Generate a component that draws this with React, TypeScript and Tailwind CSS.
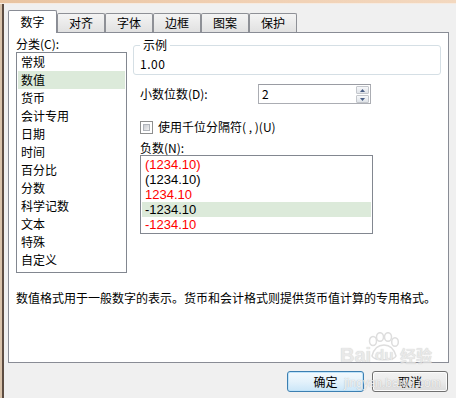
import React from "react";

const categories = ["常规", "数值", "货币", "会计专用", "日期", "时间", "百分比", "分数", "科学记数", "文本", "特殊", "自定义"];
const negs: { t: string; red: boolean }[] = [
  { t: "(1234.10)", red: true },
  { t: "(1234.10)", red: false },
  { t: "1234.10", red: true },
  { t: "-1234.10", red: false },
  { t: "-1234.10", red: true },
];
const tabs = ["对齐", "字体", "边框", "图案", "保护"];

function SpinArrows() {
  return (
    <div className="flex flex-col w-[13px] h-[18px] my-[0px] mr-[1px] gap-[1px] pt-[1px]">
      <div className="flex-1 flex items-center justify-center border border-[#c4c7cc] rounded-[1px] bg-gradient-to-b from-[#f7f8fa] to-[#dfe3e8]">
        <svg width="5" height="3" viewBox="0 0 5 3"><path d="M0 3 L2.5 0 L5 3 Z" fill="#4a5f86" /></svg>
      </div>
      <div className="flex-1 flex items-center justify-center border border-[#c4c7cc] rounded-[1px] bg-gradient-to-b from-[#f7f8fa] to-[#dfe3e8]">
        <svg width="5" height="3" viewBox="0 0 5 3"><path d="M0 0 L2.5 3 L5 0 Z" fill="#4a5f86" /></svg>
      </div>
    </div>
  );
}

export default function App() {
  return (
    <div className="relative w-[456px] h-[398px] overflow-hidden bg-[#f0f0f0] font-['Noto_Sans_CJK_SC',sans-serif] text-[12px] text-black flex flex-col">
      <div className="h-[3px] bg-gradient-to-r from-[#e8c3a0] via-[#f0cfb2] to-[#f3d8bf]" />
      <div className="h-[1px] bg-[#f6ebe1]" />
      <div className="flex flex-1">
        <div className="w-[2px] bg-[#d9c3ab]" />
        <div className="w-[2px] bg-[#5d4d42]" />
        <div className="flex-1 flex flex-col pl-[4px] pr-[7px] pt-[6px]">
          {/* tabs */}
          <div className="flex items-end h-[22px] relative z-10">
            <div className="w-[49px] h-[23px] -mb-[1px] border border-b-0 border-[#898c95] bg-white rounded-t-[2px] flex items-center justify-center leading-[16px] pb-[1px]">
              数字
            </div>
            {tabs.map((t) => (
              <div
                key={t}
                className="w-[48px] h-[19px] border border-b-0 border-[#8e9096] rounded-t-[2px] bg-gradient-to-b from-[#f4f4f4] to-[#e1e1e1] flex items-center justify-center leading-[16px]"
              >
                {t}
              </div>
            ))}
          </div>
          {/* panel */}
          <div className="w-[441px] h-[331px] border border-[#898c95] bg-white flex flex-col">
            <div className="flex">
              {/* left column */}
              <div className="ml-[7px] w-[111px] flex flex-col">
                <div className="mt-[3px] leading-[16px]">分类(C):</div>
                <div className="h-[221px] border border-[#828790] bg-white flex flex-col">
                  {categories.map((c) => (
                    <div
                      key={c}
                      className={
                        c === "数值"
                          ? "h-[18px] leading-[18px] mx-[1px] pl-[3px] bg-[#dceada]"
                          : "h-[18px] leading-[18px] mx-[1px] pl-[3px]"
                      }
                    >
                      {c}
                    </div>
                  ))}
                </div>
              </div>
              {/* right column */}
              <div className="ml-[6px] w-[308px] flex flex-col">
                <fieldset className="mt-[4px] border border-[#d5dfe5] rounded-[3px] px-[6px] pt-[3px] pb-[2px]">
                  <legend className="px-[3px] leading-[16px]">示例</legend>
                  <div className="leading-[16px] tracking-[0.5px]">1.00</div>
                </fieldset>
                <div className="mt-[9px] flex items-center h-[20px] pl-[7px]">
                  <div className="w-[118px] leading-[16px]">小数位数(D):</div>
                  <div className="w-[113px] h-[20px] border border-[#abadb3] border-t-[#9a9ca3] bg-white flex items-center justify-between">
                    <span className="pl-[3px] leading-[16px]">2</span>
                    <SpinArrows />
                  </div>
                </div>
                <div className="mt-[15px] flex items-center h-[16px] pl-[7px]">
                  <div className="w-[13px] h-[13px] border border-[#8e8f8f] bg-white p-[2px]">
                    <div className="w-full h-full border border-[#b0b4ba] bg-gradient-to-br from-[#c9ccd2] to-[#f2f2f2]" />
                  </div>
                  <span className="ml-[5px] leading-[16px]">使用千位分隔符( , )(U)</span>
                </div>
                <div className="mt-[6px] pl-[7px] leading-[14px]">负数(N):</div>
                <div className="ml-[7px] w-[233px] h-[79px] border border-[#828790] bg-white pt-[1px] flex flex-col font-['Liberation_Sans',sans-serif] text-[13px]">
                  {negs.map((n, i) => (
                    <div
                      key={i}
                      className={
                        (i === 3 ? "bg-[#dceada] " : "") +
                        (n.red ? "text-[#ff0000] " : "text-black ") +
                        "h-[15px] leading-[15px] mx-[1px] pl-[3px]"
                      }
                    >
                      {n.t}
                    </div>
                  ))}
                </div>
              </div>
            </div>
            <div className="mt-[17px] ml-[7px] leading-[16px]">
              数值格式用于一般数字的表示。货币和会计格式则提供货币值计算的专用格式。
            </div>
          </div>
          {/* buttons */}
          <div className="mt-[8px] flex justify-end gap-[8px] mr-[1px]">
            <div className="w-[77px] h-[21px] rounded-[3px] border border-[#3c7fb1] bg-gradient-to-b from-[#f3f9fd] via-[#e4f2fb] to-[#cbe6f8] shadow-[inset_0_0_0_1px_#bfe3fa] flex items-center justify-center leading-[16px]">
              确定
            </div>
            <div className="w-[76px] h-[21px] rounded-[3px] border border-[#707070] bg-gradient-to-b from-[#f2f2f2] via-[#ebebeb] to-[#dcdcdc] shadow-[inset_0_0_0_1px_#fcfcfc] flex items-center justify-center leading-[16px]">
              取消
            </div>
          </div>
        </div>
      </div>

      {/* Baidu watermark overlay */}
      <div className="absolute left-[338px] top-[332px] w-[100px] h-[60px] pointer-events-none select-none opacity-80">
        <svg className="absolute left-[26px] top-[0px]" width="36" height="30" viewBox="0 0 36 30">
          <g fill="none" stroke="#d6d6d6" strokeWidth="1.5">
            <ellipse cx="9" cy="9" rx="3.5" ry="4.5" />
            <ellipse cx="16" cy="5" rx="3.5" ry="4.3" />
            <ellipse cx="24" cy="5" rx="3.5" ry="4.3" />
            <ellipse cx="31" cy="10" rx="3.3" ry="4.3" />
            <path d="M8 24 C10 16, 14 13, 20 13 C26 13, 30 17, 32 24 C30 29, 10 29, 8 24 Z" />
          </g>
        </svg>
        <div className="absolute left-[2px] top-[12px] font-['Liberation_Sans',sans-serif] font-bold text-[20px] leading-[22px] text-[#e4e4e4] [text-shadow:0_0_1px_#b8b8b8]">
          Bai
        </div>
        <div className="absolute left-[37px] top-[14px] font-['Liberation_Sans',sans-serif] font-bold text-[15px] leading-[18px] text-[#e4e4e4] [text-shadow:0_0_1px_#b8b8b8]">
          du
        </div>
        <div className="absolute left-[62px] top-[13px] font-bold text-[16px] leading-[20px] text-[#e4e4e4] [text-shadow:0_0_1px_#b8b8b8]">
          经验
        </div>
        <div className="absolute left-[6px] top-[44px] font-['Liberation_Sans',sans-serif] text-[12px] leading-[14px] text-[#f4f4f4] [text-shadow:0_0_1px_#9a9a9a]">
          jingyan.baidu.com
        </div>
      </div>
    </div>
  );
}
